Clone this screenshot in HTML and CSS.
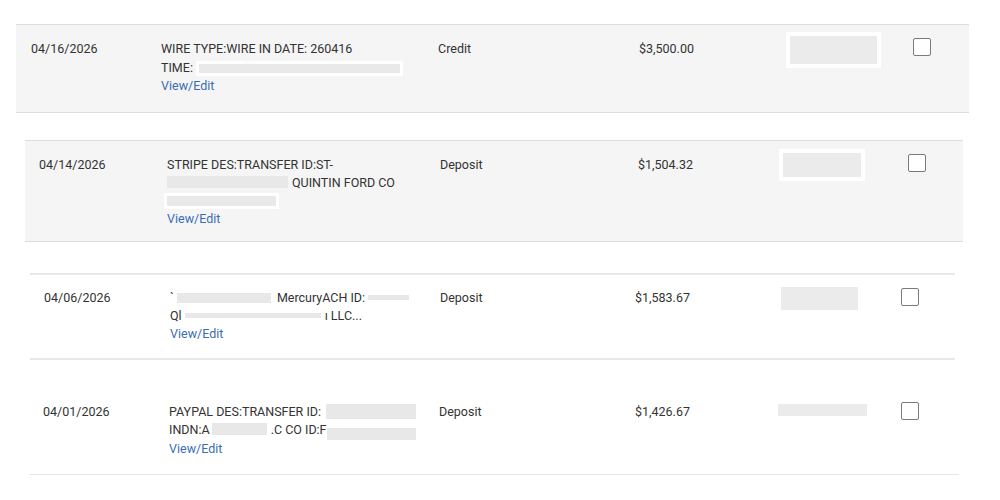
FILE: index.html
```html
<!DOCTYPE html>
<html lang="en">
<head>
    <meta charset="UTF-8">
    <meta name="viewport" content="width=device-width, initial-scale=1.0">
    <title>Transactions</title>
    <link rel="stylesheet" href="styles.css">
</head>
<body>
    <div class="txn-list">
        <div class="txn txn-wire">
            <div class="txn-date">04/16/2026</div>
            <div class="txn-desc">
                <div class="desc-line">WIRE TYPE:WIRE IN DATE: 260416</div>
                <div class="desc-line">TIME:<span class="redact redact-boxed" style="width: 201px; margin-left: 6px"></span></div>
                <a class="view-edit" href="#">View/Edit</a>
            </div>
            <div class="txn-type">Credit</div>
            <div class="txn-amount">$3,500.00</div>
            <div class="txn-memo"><span class="memo-box memo-framed"></span></div>
            <div class="txn-check"><span class="checkbox"></span></div>
        </div>

        <div class="txn txn-stripe">
            <div class="txn-date">04/14/2026</div>
            <div class="txn-desc">
                <div class="desc-line">STRIPE DES:TRANSFER ID:ST-</div>
                <div class="desc-line"><span class="redact redact-tall" style="width: 121px; margin-right: 4px"></span>QUINTIN FORD CO</div>
                <div class="desc-line"><span class="redact redact-boxed redact-mid" style="width: 109px"></span></div>
                <a class="view-edit" href="#">View/Edit</a>
            </div>
            <div class="txn-type">Deposit</div>
            <div class="txn-amount">$1,504.32</div>
            <div class="txn-memo"><span class="memo-box memo-framed"></span></div>
            <div class="txn-check"><span class="checkbox"></span></div>
        </div>

        <div class="txn txn-mercury">
            <div class="txn-date">04/06/2026</div>
            <div class="txn-desc">
                <div class="desc-line">`<span class="redact redact-mid" style="width: 94px; margin: 0 6px 0 3px"></span>MercuryACH ID:<span class="redact redact-thin" style="width: 41px; margin-left: 3px"></span></div>
                <div class="desc-line">Ql<span class="redact redact-thin" style="width: 136px; margin: 0 4px 0 3px"></span>ı LLC...</div>
                <a class="view-edit" href="#">View/Edit</a>
            </div>
            <div class="txn-type">Deposit</div>
            <div class="txn-amount">$1,583.67</div>
            <div class="txn-memo"><span class="memo-box"></span></div>
            <div class="txn-check"><span class="checkbox"></span></div>
        </div>

        <div class="txn txn-paypal">
            <div class="txn-date">04/01/2026</div>
            <div class="txn-desc">
                <div class="desc-line">PAYPAL DES:TRANSFER ID:<span class="redact redact-big" style="width: 90px; margin-left: 5px"></span></div>
                <div class="desc-line">INDN:A<span class="redact redact-lg" style="width: 55px; margin: 0 4px 0 2px"></span>.C CO ID:F<span class="redact redact-lg redact-low" style="width: 89px"></span></div>
                <a class="view-edit" href="#">View/Edit</a>
            </div>
            <div class="txn-type">Deposit</div>
            <div class="txn-amount">$1,426.67</div>
            <div class="txn-memo"><span class="memo-box memo-flat"></span></div>
            <div class="txn-check"><span class="checkbox"></span></div>
        </div>
    </div>
</body>
</html>
```

FILE: styles.css
```css
* {
    margin: 0;
    padding: 0;
    box-sizing: border-box;
}

body {
    font-family: Roboto, 'Liberation Sans', Arial, sans-serif;
    font-size: 12.5px;
    color: #333;
    background: white;
    padding-top: 24px;
}

.txn-list {
    display: flex;
    flex-direction: column;
}

.txn {
    display: grid;
    align-items: start;
    line-height: 18px;
}

.txn-wire {
    margin-left: 16px;
    width: 953px;
    padding: 15px 0 16px 15px;
    background: #f5f5f5;
    border-top: 1px solid #dedede;
    border-bottom: 1px solid #dedede;
    grid-template-columns: 130px 277px 201px 148px 126px 40px;
    line-height: 18.5px;
}

.txn-stripe {
    margin: 27px 0 0 25px;
    width: 938px;
    padding: 15px 0 13px 14px;
    background: #f5f5f5;
    border-top: 1px solid #dedede;
    border-bottom: 1px solid #dedede;
    grid-template-columns: 128px 273px 198px 140px 130px 40px;
}

.txn-mercury {
    margin: 31px 0 0 30px;
    width: 925px;
    padding: 14px 0 15px 14px;
    border-top: 2px solid #e8e8e8;
    border-bottom: 2px solid #e8e8e8;
    grid-template-columns: 126px 270px 195px 146px 120px 40px;
}

.txn-paypal {
    margin: 43px 0 0 29px;
    width: 930px;
    padding: 0 0 16px 14px;
    border-bottom: 1px solid #e6e6e6;
    grid-template-columns: 126px 270px 196px 143px 123px 40px;
}

.desc-line {
    white-space: nowrap;
}

.view-edit {
    display: block;
    color: #3a6db3;
    text-decoration: none;
}

/* Grey blocks that hide private text */
.redact {
    display: inline-block;
    height: 9px;
    background: #e8e8e8;
    vertical-align: middle;
}

.redact-boxed {
    box-shadow: 0 0 0 3px #fff;
    background: #e9e9e9;
}

.redact-tall {
    height: 12px;
    vertical-align: -1px;
}

.redact-mid {
    height: 10px;
}

.redact-thin {
    height: 5px;
    vertical-align: 2px;
}

.redact-big {
    height: 15px;
    vertical-align: -3px;
}

.redact-lg {
    height: 12px;
    vertical-align: -1px;
}

.redact-low {
    vertical-align: -6px;
}

.memo-box {
    display: block;
    width: 78px;
    height: 23px;
    background: #ebebeb;
}

.txn-wire .memo-box {
    width: 87px;
    height: 28px;
    margin-top: -4px;
}

.txn-stripe .memo-box {
    width: 78px;
    height: 24px;
    margin: -3px 0 0 5px;
}

.memo-framed {
    box-shadow: 0 0 0 4px #fff;
}

.txn-wire .memo-framed {
    margin-left: 3px;
}

.txn-mercury .memo-box {
    width: 77px;
    margin-top: -2px;
}

.txn-paypal .memo-box {
    width: 89px;
    height: 12px;
    margin-top: 1px;
}

.checkbox {
    display: block;
    width: 18px;
    height: 18px;
    border: 1px solid #7a7a7a;
    border-radius: 2px;
    background: white;
}

.txn-wire .checkbox,
.txn-stripe .checkbox {
    margin-top: -2px;
}

.txn-mercury .checkbox,
.txn-paypal .checkbox {
    margin-top: -1px;
}
```
